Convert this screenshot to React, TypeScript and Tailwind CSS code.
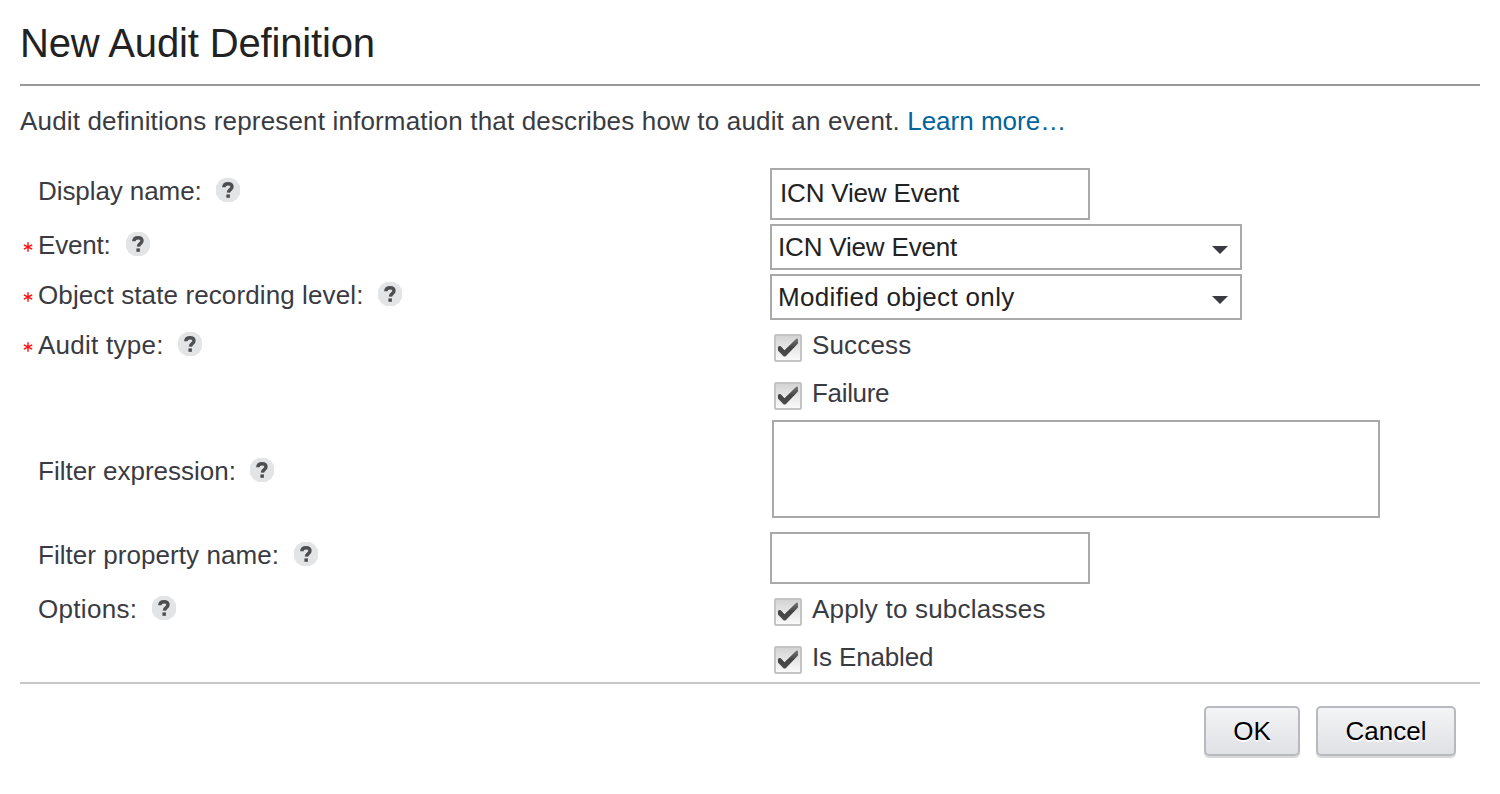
import type { ReactNode } from "react";

function HelpIcon() {
  return (
    <svg className="mt-[3px] size-6 shrink-0" viewBox="0 0 24 24" fill="none" aria-label="Help">
      <path d="M8 0h8l5 3 3 5v8l-3 5-5 3H8l-5-3-3-5V8l3-5z" fill="#e3e4e6" />
      <g className="blur-[0.5px]">
        <path d="M7.8 9.2C7.9 6.6 9.5 5.7 12 5.7c2.5 0 4 1 4 3 0 3-3.4 2.8-3.6 5.9" stroke="#4c4e52" strokeWidth="3.4" />
        <path d="M10.4 16.4h3.5v3.4h-3.5z" fill="#4c4e52" />
      </g>
    </svg>
  );
}

function Caret() {
  return (
    <svg className="mr-3 mt-1.5 h-2 w-4" viewBox="0 0 16 8" aria-hidden="true">
      <path d="M0 0h16L8 8z" fill="#3a3b42" />
    </svg>
  );
}

function Asterisk() {
  return (
    <svg className="mt-2.5 h-[10px] w-[10px]" viewBox="0 0 10 10" stroke="#ff0d0d" strokeWidth="1.4" fill="none" aria-label="Required">
      <path d="M5 0.2v9.6M0.8 2.8l8.4 4.4M9.2 2.8L0.8 7.2" />
    </svg>
  );
}

function Row({ className, label, labelClass, required, children }: {
  className: string;
  label: string;
  labelClass: string;
  required?: boolean;
  children: ReactNode;
}) {
  return (
    <div className={`flex ${className}`}>
      <div className="flex w-[750px] shrink-0">
        <span className="w-[18px] shrink-0 pl-[3px] pt-[3px]">{required && <Asterisk />}</span>
        <span className={`shrink-0 whitespace-nowrap ${labelClass}`}>{label}</span>
        <HelpIcon />
      </div>
      {children}
    </div>
  );
}

function CheckItem({ label, className }: { label: string; className: string }) {
  return (
    <div className="flex h-12 items-start pl-1">
      <svg className="mt-3 size-7" viewBox="0 0 28 28" aria-hidden="true">
        <defs>
          <linearGradient id="boxFill" x1="0" y1="0" x2="0" y2="1">
            <stop offset="0" stopColor="#d2d2d2" />
            <stop offset="1" stopColor="#fcfcfc" />
          </linearGradient>
          <linearGradient id="tickFill" x1="0" y1="0" x2="0" y2="1">
            <stop offset="0" stopColor="#777" />
            <stop offset="0.5" stopColor="#444" />
            <stop offset="1" stopColor="#4c4c4c" />
          </linearGradient>
        </defs>
        <rect x="1" y="1" width="26" height="26" rx="1" fill="url(#boxFill)" stroke="#c4c4c4" strokeWidth="2" />
        <path className="blur-[0.5px]" d="M4 12.5l2.5-.5 4 4.3L22.5 4.5l1.5.5v4.5L11.5 22.5h-1.8L4 16.5z" fill="url(#tickFill)" />
      </svg>
      <span className={`ml-2.5 mt-[7px] whitespace-nowrap ${className}`}>{label}</span>
    </div>
  );
}

function Select({ value, className }: { value: string; className: string }) {
  return (
    <div className="mt-0.5 flex h-[46px] w-[472px] items-center justify-between border-2 border-[#a9a9a9] pl-1.5 text-[#222]">
      <span className={`-mt-px whitespace-nowrap ${className}`}>{value}</span>
      <Caret />
    </div>
  );
}

function Button({ label, className }: { label: string; className: string }) {
  return (
    <button className={`h-[50px] rounded-[5px] border-2 border-[#b8b9be] bg-linear-to-b from-[#f3f4f6] to-[#e0e1e4] text-center text-black shadow-[0_2px_0_#d8d8da] [text-shadow:0_2px_0_#fff] ${className}`}>
      {label}
    </button>
  );
}

export default function App() {
  return (
    <main className="flex h-[794px] w-[1500px] flex-col bg-white px-5 font-['Liberation_Sans',Arial,sans-serif] text-[26px] leading-8 text-[#3a3b42]">
      <header className="h-[86px] border-b-2 border-[#999] pt-5">
        <h1 className="text-[40px] leading-[46px] tracking-[-0.15px] text-[#222]">New Audit Definition</h1>
      </header>
      <p className="mt-[19px] whitespace-nowrap">
        <span className="tracking-[0.164px]">Audit definitions represent information that describes how to audit an event. </span>
        <a className="text-[#00649d]">Learn more…</a>
      </p>
      <form className="mt-[29px] flex h-[518px] flex-col border-b-2 border-[#c8c8c8]">
        <Row className="h-14 [&>div:first-child]:pt-[9px]" label="Display name:" labelClass="w-[178px] tracking-[-0.08px]">
          <div className="mt-0.5 h-[52px] w-80 border-2 border-[#a9a9a9] pl-2 pt-[7px] tracking-[-0.18px] text-[#222]">ICN View Event</div>
        </Row>
        <Row className="h-[50px] [&>div:first-child]:pt-[7px]" required label="Event:" labelClass="w-[88px] tracking-[-0.2px]">
          <Select value="ICN View Event" className="tracking-[-0.18px]" />
        </Row>
        <Row className="h-[50px] [&>div:first-child]:pt-[7px]" required label="Object state recording level:" labelClass="w-[340px] tracking-[0.11px]">
          <Select value="Modified object only" className="tracking-[0.34px]" />
        </Row>
        <Row className="h-24 [&>div:first-child]:pt-[7px]" required label="Audit type:" labelClass="w-[140px] tracking-[0.25px]">
          <div>
            <CheckItem label="Success" className="tracking-[0.15px]" />
            <CheckItem label="Failure" className="tracking-[-0.33px]" />
          </div>
        </Row>
        <Row className="h-28 [&>div:first-child]:pt-[37px]" label="Filter expression:" labelClass="w-[212px]">
          <div className="ml-0.5 mt-0.5 h-[98px] w-[608px] border-2 border-[#a9a9a9]" />
        </Row>
        <Row className="h-14 [&>div:first-child]:pt-[9px]" label="Filter property name:" labelClass="w-[256px] tracking-[0.05px]">
          <div className="mt-0.5 h-[52px] w-80 border-2 border-[#a9a9a9]" />
        </Row>
        <Row className="h-24 [&>div:first-child]:pt-[7px]" label="Options:" labelClass="w-[114px] tracking-[0.3px]">
          <div>
            <CheckItem label="Apply to subclasses" className="tracking-[0.2px]" />
            <CheckItem label="Is Enabled" className="tracking-[-0.15px]" />
          </div>
        </Row>
      </form>
      <footer className="flex justify-end gap-4 pr-6 pt-[22px]">
        <Button label="OK" className="w-24" />
        <Button label="Cancel" className="w-[140px]" />
      </footer>
    </main>
  );
}
